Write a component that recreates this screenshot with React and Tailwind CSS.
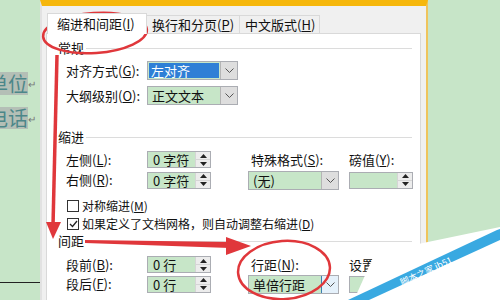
import React from 'react';

const Key = ({ children }) => <span className="underline underline-offset-[1px]">{children}</span>;

const Up = () => (
  <svg width="7" height="4" viewBox="0 0 7 4"><path d="M0 4 L3.5 0 L7 4 Z" fill="#222" /></svg>
);
const Down = () => (
  <svg width="7" height="4" viewBox="0 0 7 4"><path d="M0 0 L3.5 4 L7 0 Z" fill="#222" /></svg>
);

const Spinner = ({ value, w = 'w-[64px]' }) => (
  <div className={`flex h-[17px] ${w} border border-[#abadb3] bg-[#c7e6c8]`}>
    <div className="flex-1 pl-[5px] leading-[15px]">{value}</div>
    <div className="flex w-[15px] flex-col border-l border-[#d5d5d5] bg-[#ececec]">
      <div className="flex flex-1 items-center justify-center border-b border-[#d5d5d5]"><Up /></div>
      <div className="flex flex-1 items-center justify-center"><Down /></div>
    </div>
  </div>
);

const Select = ({ children, hot }) => (
  <div className="flex h-[19px] w-[91px] border border-[#abadb3] bg-[#c7e6c8]">
    <div className="flex flex-1 items-center pl-[1px] leading-[17px]">{children}</div>
    <div
      className={`flex w-[17px] items-center justify-center border-l ${
        hot ? 'border-[#3c7fb1] bg-[#e5f1fb]' : 'border-[#b5b5b5] bg-[#dedede]'
      }`}
    >
      <svg width="9" height="5" viewBox="0 0 9 5">
        <path d="M0.5 0.5 L4.5 4.5 L8.5 0.5" fill="none" stroke="#555" strokeWidth="1" />
      </svg>
    </div>
  </div>
);

const Section = ({ title }) => (
  <div className="flex h-[18px] items-center pl-[11px] pr-[8px]">
    <span className="leading-[18px]">{title}</span>
    <div className="ml-[2px] h-px flex-1 bg-[#dcdcdc]" />
  </div>
);

const Check = ({ checked, children }) => (
  <div className="flex h-[16px] items-center pl-[20px] text-[12px]">
    <div className="flex h-[12px] w-[12px] items-center justify-center border border-[#333] bg-white">
      {checked && (
        <svg width="9" height="8" viewBox="0 0 9 8">
          <path d="M1 4 L3.5 6.5 L8 1" fill="none" stroke="#222" strokeWidth="1.3" />
        </svg>
      )}
    </div>
    <span className="ml-[3px] whitespace-nowrap leading-[16px]">{children}</span>
  </div>
);

const Row = ({ children, className = '' }) => (
  <div className={`grid grid-cols-[81px_101px_101px_1fr] items-center pl-[19px] ${className}`}>{children}</div>
);

export default function App() {
  return (
    <div className="relative flex h-[300px] w-[500px] overflow-hidden bg-[#c7e5c8] font-['Noto_Sans_CJK_SC',sans-serif] text-[13px] text-[#111]">
      {/* 文档区域 */}
      <div className="flex w-[40px] flex-col overflow-hidden pt-[72px] text-[20px] text-[#4c8789]">
        <div className="-ml-[12px] flex h-[23px] items-center whitespace-nowrap">
          <span className="bg-[#b4bfb6] leading-[23px]">单位</span>
          <span className="text-[10px] text-[#777]">↵</span>
        </div>
        <div className="-ml-[12px] mt-[12px] flex h-[22px] items-center whitespace-nowrap">
          <span className="bg-[#b4bfb6] leading-[22px]">电话</span>
          <span className="text-[10px] text-[#777]">↵</span>
        </div>
        <div className="mt-[153px] h-px w-full bg-[#222]" />
      </div>

      {/* 段落对话框 */}
      <div className="flex w-[388px] flex-col border-l-2 border-r-2 border-t-[6px] border-l-[#e2e2e2] border-r-[#efc45c] border-t-[#f6b70c] bg-[#f0f0f0]">
        <div className="mt-[7px] flex h-[20px] items-end pl-[5px]">
          <div className="relative z-10 -mb-px flex h-[21px] w-[100px] items-center border border-b-0 border-[#d9d9d9] bg-white pl-[9px]">
            缩进和间距(<Key>I</Key>)
          </div>
          <div className="flex h-[18px] w-[93px] items-center border border-l-0 border-b-0 border-[#d9d9d9] bg-[#f0f0f0] pl-[5px]">
            换行和分页(<Key>P</Key>)
          </div>
          <div className="flex h-[18px] w-[80px] items-center border border-l-0 border-b-0 border-[#d9d9d9] bg-[#f0f0f0] pl-[5px]">
            中文版式(<Key>H</Key>)
          </div>
        </div>

        <div className="ml-[4px] mr-[5px] flex-1 border border-[#d9d9d9] bg-white pt-[5px]">
          <Section title="常规" />
          <Row className="mt-[4px] h-[19px]">
            <span>对齐方式(<Key>G</Key>):</span>
            <Select>
              <span className="flex h-[15px] w-[70px] items-center bg-[#2f7fd6] pl-[2px] text-white">左对齐</span>
            </Select>
          </Row>
          <Row className="mt-[6px] h-[19px]">
            <span>大纲级别(<Key>O</Key>):</span>
            <Select><span className="pl-[3px]">正文文本</span></Select>
          </Row>

          <div className="mt-[23px]"><Section title="缩进" /></div>
          <Row className="mt-[4px] h-[17px]">
            <span>左侧(<Key>L</Key>):</span>
            <Spinner value="0 字符" />
            <span className="pl-[3px]">特殊格式(<Key>S</Key>):</span>
            <span>磅值(<Key>Y</Key>):</span>
          </Row>
          <Row className="mt-[3px] h-[20px]">
            <span>右侧(<Key>R</Key>):</span>
            <Spinner value="0 字符" />
            <Select><span className="pl-[3px]">(无)</span></Select>
            <Spinner value="" />
          </Row>
          <div className="mt-[8px]"><Check>对称缩进(<Key>M</Key>)</Check></div>
          <div className="mt-[2px]"><Check checked>如果定义了文档网格，则自动调整右缩进(<Key>D</Key>)</Check></div>

          <Section title="间距" />
          <Row className="mt-[5px] h-[17px]">
            <span>段前(<Key>B</Key>):</span>
            <Spinner value="0 行" />
            <span className="pl-[3px]">行距(<Key>N</Key>):</span>
            <span>设置值(<Key>A</Key>):</span>
          </Row>
          <Row className="mt-[2px] h-[20px]">
            <span>段后(<Key>F</Key>):</span>
            <Spinner value="0 行" />
            <Select hot><span className="pl-[3px]">单倍行距</span></Select>
            <Spinner value="" />
          </Row>
          <div className="mt-[5px]"><Check>在相同样式的段落间不添加空格(<Key>C</Key>)</Check></div>
        </div>
      </div>

      {/* 标注与水印 */}
      <svg className="pointer-events-none absolute inset-0" width="500" height="300" viewBox="0 0 500 300">
        <ellipse cx="95" cy="33" rx="52" ry="20" transform="rotate(-4 95 33)" fill="none" stroke="#e0373b" strokeWidth="2.5" />
        <path d="M57 55 L53 226" stroke="#e0373b" strokeWidth="3.5" fill="none" />
        <polygon points="46,222 61,222 53,239" fill="#e0373b" />
        <polygon points="85,240 230,242 230,248 85,243" fill="#e0373b" />
        <polygon points="226,237 251,246 226,255" fill="#e0373b" />
        <ellipse cx="284" cy="270" rx="46" ry="29" transform="rotate(-4 284 270)" fill="none" stroke="#e0373b" strokeWidth="2.5" />
        <polygon points="375,253 500,227 500,300 354,300" fill="#ffffff" />
        <polygon points="348,300 497,230 500,229 500,240 369,300" fill="#39a9e1" />
        <text x="0" y="0" transform="translate(402 286) rotate(-25)" fill="#ffffff" fontSize="9" fontFamily="Noto Sans CJK SC, sans-serif">
          脚本之家 jb51
        </text>
      </svg>
    </div>
  );
}
